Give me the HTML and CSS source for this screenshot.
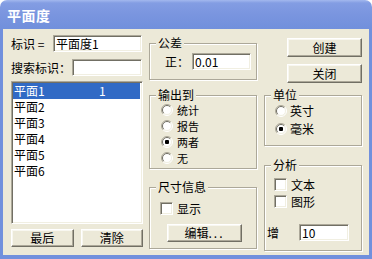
FILE: index.html
```html
<!DOCTYPE html>
<html>
<head>
<meta charset="utf-8">
<link rel="stylesheet" href="styles.css">
</head>
<body>
<div class="window">
  <div class="titlebar"><span class="title">平面度</span></div>
  <div class="frame">
    <div class="col left">
      <div class="field row1"><span class="lbl">标识 =</span><span class="input w89">平面度1</span></div>
      <div class="field row2"><span class="lbl">搜索标识：</span><span class="input w70"></span></div>
      <div class="listbox">
        <div class="item sel"><span class="name">平面1</span><span class="num">1</span></div>
        <div class="item"><span class="name">平面2</span></div>
        <div class="item"><span class="name">平面3</span></div>
        <div class="item"><span class="name">平面4</span></div>
        <div class="item"><span class="name">平面5</span></div>
        <div class="item"><span class="name">平面6</span></div>
      </div>
      <div class="btnrow"><button class="btn">最后</button><button class="btn">清除</button></div>
    </div>

    <div class="col mid">
      <div class="group g-tol">
        <span class="legend">公差</span>
        <div class="tolrow"><span class="lbl">正：</span><span class="input w59">0.01</span></div>
      </div>
      <div class="group g-out">
        <span class="legend">输出到</span>
        <div class="opt"><svg class="radio" viewBox="0 0 12 12"><circle cx="6" cy="6" r="5" fill="#fff"/><path d="M2.1 9.9A5.5 5.5 0 0 1 9.9 2.1" fill="none" stroke="#aca899"/><path d="M9.9 2.1A5.5 5.5 0 0 1 2.1 9.9" fill="none" stroke="#fff"/><path d="M2.8 9.2A4.5 4.5 0 0 1 9.2 2.8" fill="none" stroke="#716f64"/><path d="M9.2 2.8A4.5 4.5 0 0 1 2.8 9.2" fill="none" stroke="#f1efe2"/></svg><span class="otext">统计</span></div>
        <div class="opt"><svg class="radio" viewBox="0 0 12 12"><circle cx="6" cy="6" r="5" fill="#fff"/><path d="M2.1 9.9A5.5 5.5 0 0 1 9.9 2.1" fill="none" stroke="#aca899"/><path d="M9.9 2.1A5.5 5.5 0 0 1 2.1 9.9" fill="none" stroke="#fff"/><path d="M2.8 9.2A4.5 4.5 0 0 1 9.2 2.8" fill="none" stroke="#716f64"/><path d="M9.2 2.8A4.5 4.5 0 0 1 2.8 9.2" fill="none" stroke="#f1efe2"/></svg><span class="otext">报告</span></div>
        <div class="opt"><svg class="radio" viewBox="0 0 12 12"><circle cx="6" cy="6" r="5" fill="#fff"/><path d="M2.1 9.9A5.5 5.5 0 0 1 9.9 2.1" fill="none" stroke="#aca899"/><path d="M9.9 2.1A5.5 5.5 0 0 1 2.1 9.9" fill="none" stroke="#fff"/><path d="M2.8 9.2A4.5 4.5 0 0 1 9.2 2.8" fill="none" stroke="#716f64"/><path d="M9.2 2.8A4.5 4.5 0 0 1 2.8 9.2" fill="none" stroke="#f1efe2"/><rect x="4" y="4" width="4" height="4" rx="1" fill="#000"/></svg><span class="otext">两者</span></div>
        <div class="opt"><svg class="radio" viewBox="0 0 12 12"><circle cx="6" cy="6" r="5" fill="#fff"/><path d="M2.1 9.9A5.5 5.5 0 0 1 9.9 2.1" fill="none" stroke="#aca899"/><path d="M9.9 2.1A5.5 5.5 0 0 1 2.1 9.9" fill="none" stroke="#fff"/><path d="M2.8 9.2A4.5 4.5 0 0 1 9.2 2.8" fill="none" stroke="#716f64"/><path d="M9.2 2.8A4.5 4.5 0 0 1 2.8 9.2" fill="none" stroke="#f1efe2"/></svg><span class="otext">无</span></div>
      </div>
      <div class="group g-dim">
        <span class="legend">尺寸信息</span>
        <div class="chk"><span class="box"></span><span>显示</span></div>
        <button class="btn btn-edit">编辑<span class="dots">...</span></button>
      </div>
    </div>

    <div class="col right">
      <button class="btn btn-big first">创建</button>
      <button class="btn btn-big second">关闭</button>
      <div class="group g-unit">
        <span class="legend">单位</span>
        <div class="opt opt2"><svg class="radio" viewBox="0 0 12 12"><circle cx="6" cy="6" r="5" fill="#fff"/><path d="M2.1 9.9A5.5 5.5 0 0 1 9.9 2.1" fill="none" stroke="#aca899"/><path d="M9.9 2.1A5.5 5.5 0 0 1 2.1 9.9" fill="none" stroke="#fff"/><path d="M2.8 9.2A4.5 4.5 0 0 1 9.2 2.8" fill="none" stroke="#716f64"/><path d="M9.2 2.8A4.5 4.5 0 0 1 2.8 9.2" fill="none" stroke="#f1efe2"/></svg><span>英寸</span></div>
        <div class="opt opt2 gap"><svg class="radio" viewBox="0 0 12 12"><circle cx="6" cy="6" r="5" fill="#fff"/><path d="M2.1 9.9A5.5 5.5 0 0 1 9.9 2.1" fill="none" stroke="#aca899"/><path d="M9.9 2.1A5.5 5.5 0 0 1 2.1 9.9" fill="none" stroke="#fff"/><path d="M2.8 9.2A4.5 4.5 0 0 1 9.2 2.8" fill="none" stroke="#716f64"/><path d="M9.2 2.8A4.5 4.5 0 0 1 2.8 9.2" fill="none" stroke="#f1efe2"/><rect x="4" y="4" width="4" height="4" rx="1" fill="#000"/></svg><span>毫米</span></div>
      </div>
      <div class="group g-ana">
        <span class="legend">分析</span>
        <div class="chk chk-a"><span class="box"></span><span>文本</span></div>
        <div class="chk chk-a chk-b"><span class="box"></span><span>图形</span></div>
        <div class="incrow"><span class="lbl">增</span><span class="input w50">10</span></div>
      </div>
    </div>
  </div>
</div>
</body>
</html>
```

FILE: styles.css
```css
html, body {
  margin: 0;
  padding: 0;
}
body {
  width: 372px;
  height: 259px;
  overflow: hidden;
  background: #ffffff;
  font-family: "Noto Sans CJK SC", "Liberation Sans", sans-serif;
  font-size: 12px;
  color: #000;
}
.window {
  width: 372px;
  height: 259px;
  display: flex;
  flex-direction: column;
}
.titlebar {
  height: 29px;
  flex: none;
  box-sizing: border-box;
  padding-left: 7px;
  display: flex;
  align-items: center;
  border-radius: 7px 7px 0 0;
  background: linear-gradient(#a3b8ee 0, #839de3 3px, #7a95df 50%, #7190dc 100%);
}
.title {
  color: #fff;
  font-weight: bold;
  font-size: 14px;
  line-height: 16px;
  letter-spacing: 0.5px;
}
.frame {
  flex: 1;
  display: flex;
  background: #ece9d8;
  border: 3px solid #7190dd;
  border-top: 0;
  border-bottom-width: 4px;
  padding-left: 8px;
}
.col {
  display: flex;
  flex-direction: column;
}
.left { width: 132px; }
.mid { width: 108px; margin-left: 6px; }
.right { width: 98px; margin-left: 7px; }

.field {
  display: flex;
  align-items: center;
  height: 17px;
}
.row1 { margin-top: 6px; }
.row2 { margin-top: 7px; }
.field .input {
  margin-left: auto;
  margin-right: 1px;
}
.lbl { line-height: 14px; }

.input {
  box-sizing: border-box;
  height: 17px;
  background: #fff;
  border: 1px solid;
  border-color: #aca899 #fff #fff #aca899;
  box-shadow: inset 1px 1px #716f64, inset -1px -1px #f1efe2;
  padding: 0 2px;
  line-height: 15px;
  display: flex;
  align-items: center;
}
.w89 { width: 89px; }
.w70 { width: 70px; }
.w59 { width: 59px; }
.w50 { width: 50px; }

.listbox {
  margin-top: 5px;
  height: 143px;
  box-sizing: border-box;
  background: #fff;
  border: 1px solid;
  border-color: #aca899 #fff #fff #aca899;
  box-shadow: inset 1px 1px #716f64, inset -1px -1px #f1efe2;
  padding: 1px 2px 1px 1px;
}
.item {
  height: 16px;
  line-height: 16px;
  display: flex;
  padding-left: 1px;
}
.item.sel {
  background: #316ac5;
  color: #fff;
}
.name { width: 85px; }

.btnrow {
  margin-top: 5px;
  display: grid;
  grid-template-columns: 1fr 1fr;
  column-gap: 7px;
}
.btn {
  box-sizing: border-box;
  height: 18px;
  padding: 0;
  margin: 0;
  font: inherit;
  color: #000;
  line-height: 14px;
  background: #ece9d8;
  border: 1px solid;
  border-color: #fff #716f64 #716f64 #fff;
  box-shadow: inset -1px -1px #aca899, inset 1px 1px #f8f7f0;
  border-radius: 0;
}

.group {
  position: relative;
  box-sizing: border-box;
  border: 1px solid #aca899;
  box-shadow: inset 1px 1px #fff, 1px 1px #fff;
}
.legend {
  position: absolute;
  top: -8px;
  left: 6px;
  padding: 0 2px;
  background: #ece9d8;
  line-height: 14px;
}

.g-tol {
  margin-top: 14px;
  height: 37px;
  padding: 9px 0 0 15px;
}
.tolrow {
  display: flex;
  align-items: center;
  height: 17px;
}
.tolrow .input { margin-left: 3px; }

.g-out {
  margin-top: 15px;
  height: 74px;
  padding: 6px 0 0 11px;
}
.g-out .opt {
  height: 16px;
}
.opt {
  display: flex;
  align-items: center;
  height: 15px;
  line-height: 14px;
}
.otext {
  font-size: 11px;
  line-height: 14px;
}
.radio {
  width: 12px;
  height: 12px;
  flex: none;
  margin-right: 4px;
}
.opt2 .radio { margin-right: 3px; }

.g-dim {
  margin-top: 18px;
  height: 62px;
  padding: 14px 0 0 10px;
}
.chk {
  display: flex;
  align-items: center;
  height: 13px;
  line-height: 13px;
}
.box {
  box-sizing: border-box;
  width: 13px;
  height: 13px;
  flex: none;
  margin-right: 4px;
  background: #fff;
  border: 1px solid;
  border-color: #aca899 #fff #fff #aca899;
  box-shadow: inset 1px 1px #716f64, inset -1px -1px #f1efe2;
}
.btn-edit {
  display: block;
  width: 75px;
  margin-top: 9px;
  margin-left: 7px;
}
.dots { letter-spacing: 2px; }

.btn-big {
  width: 75px;
  height: 19px;
  margin-left: 23px;
}
.first { margin-top: 9px; }
.second { margin-top: 7px; }

.g-unit {
  margin-top: 12px;
  height: 51px;
  padding: 7px 0 0 10px;
}
.gap { margin-top: 3px; }

.g-ana {
  margin-top: 19px;
  height: 86px;
  padding: 12px 0 0 2px;
}
.chk-a { margin-left: 7px; }
.chk-b { margin-top: 4px; }
.incrow {
  margin-top: 16px;
  display: flex;
  align-items: center;
  height: 17px;
}
.incrow .input { margin-left: 20px; }
```
